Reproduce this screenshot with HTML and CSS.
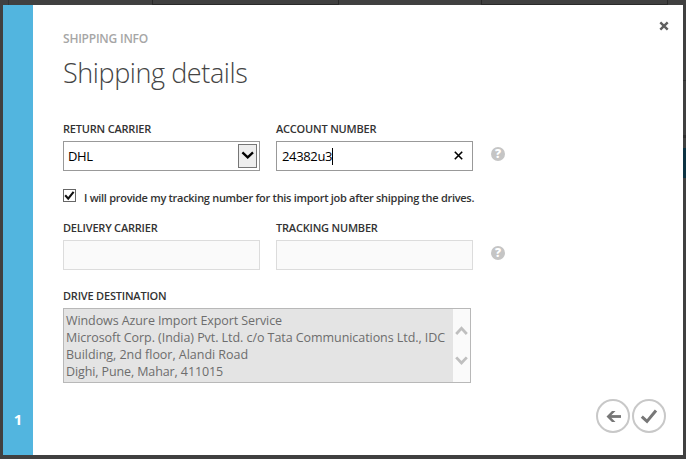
FILE: index.html
```html
<!DOCTYPE html>
<html lang="en">
<head>
<meta charset="utf-8">
<title>Shipping details</title>
<link rel="stylesheet" href="styles.css">
</head>
<body>
<div class="backdrop">
  <div class="divider"></div><div class="tile tile-a"></div><div class="tile tile-b"></div><div class="edge"></div>
</div>
<main class="dialog">
  <aside class="steps"><span class="step">1</span></aside>
  <section class="content">
    <p class="eyebrow">SHIPPING INFO</p>
    <h1 class="title">Shipping details</h1>
    <div class="row">
      <div class="field">
        <div class="label">RETURN CARRIER</div>
        <div class="input">
          <span class="value">DHL</span>
          <span class="drop"><svg width="17" height="22" viewBox="0 0 17 22"><path d="M3.4 7.4 8.7 12.4 14 7.4" fill="none" stroke="#000" stroke-width="2.3"/></svg></span>
        </div>
      </div>
      <div class="field">
        <div class="label">ACCOUNT NUMBER</div>
        <div class="input">
          <span class="value number">24382u3</span><span class="caret"></span>
          <svg class="clear" width="9" height="9" viewBox="0 0 9 9"><path d="M.8.8 8.2 8.2M8.2.8.8 8.2" fill="none" stroke="#000" stroke-width="1.6"/></svg>
        </div>
      </div>
      <span class="help">?</span>
    </div>
    <div class="check">
      <span class="box"><svg width="11" height="11" viewBox="0 0 11 11"><path d="M1.2 5.3 4.2 8.6 9.6 1.8" fill="none" stroke="#111" stroke-width="2.1"/></svg></span>
      <span class="check-text">I will provide my tracking number for this import job after shipping the drives.</span>
    </div>
    <div class="row">
      <div class="field">
        <div class="label">DELIVERY CARRIER</div>
        <div class="input disabled"></div>
      </div>
      <div class="field">
        <div class="label">TRACKING NUMBER</div>
        <div class="input disabled"></div>
      </div>
      <span class="help">?</span>
    </div>
    <div class="destination">
      <div class="label">DRIVE DESTINATION</div>
      <div class="area">
        <div class="address">
          <div class="name">Windows Azure Import Export Service</div>
          <div class="company">Microsoft Corp. (India) Pvt. Ltd. c/o Tata Communications Ltd., IDC</div>
          <div class="street">Building, 2nd floor, Alandi Road</div>
          <div class="city">Dighi, Pune, Mahar, 411015</div>
        </div>
        <div class="scroll">
          <svg width="17" height="73" viewBox="0 0 17 73"><path d="M3.2 25 8.5 19.4 13.8 25M3.2 48.4 8.5 54 13.8 48.4" fill="none" stroke="#bfbfbf" stroke-width="2.8"/></svg>
        </div>
      </div>
    </div>
  </section>
  <svg class="close" width="10" height="10" viewBox="0 0 10 10"><path d="M1.3 1.3 8.7 8.7M8.7 1.3 1.3 8.7" fill="none" stroke="#606060" stroke-width="2.4"/></svg>
  <nav class="actions">
    <svg width="34" height="34" viewBox="0 0 34 34"><circle cx="17" cy="17" r="16" fill="#fff" stroke="#c8c8c8" stroke-width="2"/><path d="M25 17.5H13" fill="none" stroke="#777" stroke-width="2.8"/><path d="M10.5 17.5 16 12H19.5L14 17.5 19.5 23H16Z" fill="#777"/></svg>
    <svg width="34" height="34" viewBox="0 0 34 34"><circle cx="17" cy="17" r="16" fill="#fff" stroke="#c8c8c8" stroke-width="2"/><path d="M9.8 17.6 15 22.4 24 11.5" fill="none" stroke="#777" stroke-width="3"/></svg>
  </nav>
</main>
</body>
</html>
```
FILE: styles.css
```css
* { box-sizing: border-box; }
body {
  margin: 0;
  width: 686px;
  height: 459px;
  padding: 5px 3px 4px;
  overflow: hidden;
  background: #404040;
  font-family: "Open Sans", "Noto Sans", sans-serif;
}
.backdrop { position: absolute; inset: 0; }
.divider { position: absolute; left: 8px; top: 0; width: 1px; height: 5px; background: #343434; }
.tile {
  position: absolute;
  top: -1px;
  height: 6px;
  border: 1px solid #292929;
}
.tile-a { left: 152px; width: 187px; }
.tile-b { left: 481px; width: 187px; }
.edge {
  position: absolute;
  left: 683px;
  top: 80px;
  width: 3px;
  height: 98px;
  background: linear-gradient(#303030 1px, transparent 1px 55px, #303030 55px 58px, transparent 58px 68px, #0d3343 68px);
}
.dialog {
  position: relative;
  display: flex;
  width: 680px;
  height: 450px;
  background: #fff;
}
.steps {
  display: flex;
  flex: none;
  align-items: flex-end;
  justify-content: center;
  width: 30px;
  padding-bottom: 26px;
  background: #52b5df;
}
.step { color: #fff; font-size: 15px; line-height: 20px; font-weight: 700; }
.content { padding: 27px 0 0 30px; color: #333; white-space: nowrap; }
.eyebrow { margin: 0; color: #a6a6a6; font-size: 12px; line-height: 14px; font-weight: 600; letter-spacing: -0.22px; }
.title { margin: 7px 0 28px; color: #444; font-size: 27px; line-height: 40px; font-weight: 300; letter-spacing: -0.42px; }
.row { display: flex; gap: 16px; }
.field { width: 197px; }
.label { margin-bottom: 4px; font-size: 11px; line-height: 16px; font-weight: 600; letter-spacing: -0.2px; }
.input {
  display: flex;
  align-items: center;
  height: 30px;
  padding: 0 2px 0 4px;
  border: 1px solid #999;
  background: #fff;
  color: #000;
}
.input.disabled { border-color: #dcdcdc; background: #fafafa; }
.value { font-size: 13px; line-height: 18px; letter-spacing: -0.35px; }
.number { margin-left: 1px; }
.caret { width: 1px; height: 17px; background: #000; }
.clear { margin: -1px 7px 0 auto; }
.drop { width: 19px; height: 24px; margin-left: auto; border: 1px solid #767676; background: #eee; }
.drop svg, .box svg, .scroll svg { display: block; }
.help {
  width: 14px;
  height: 14px;
  margin: 26px 0 0 2px;
  border-radius: 50%;
  background: #c5c5c5;
  color: #fff;
  font-size: 12px;
  line-height: 14px;
  font-weight: 800;
  text-align: center;
}
.check { display: flex; align-items: center; height: 16px; margin: 17px 0 16px; }
.box { width: 13px; height: 13px; margin-top: -1px; border: 1px solid #666; background: #fff; }
.check-text { margin: 4px 0 0 8px; font-size: 11px; line-height: 16px; font-weight: 600; letter-spacing: -0.29px; }
.destination { margin-top: 18px; }
.area { display: flex; width: 408px; height: 75px; border: 1px solid #b8b8b8; background: #e4e4e4; }
.address { flex: 1; padding: 3px 0 0 2px; color: #6d6d6d; font-size: 12.5px; line-height: 17px; }
.name { letter-spacing: -0.09px; }
.company { letter-spacing: -0.06px; }
.street { letter-spacing: -0.03px; }
.city { letter-spacing: -0.11px; }
.scroll { width: 17px; background: #fafafa; }
.close { position: absolute; top: 16px; right: 14px; }
.actions { position: absolute; display: flex; gap: 2px; right: 17px; bottom: 22px; }
```
